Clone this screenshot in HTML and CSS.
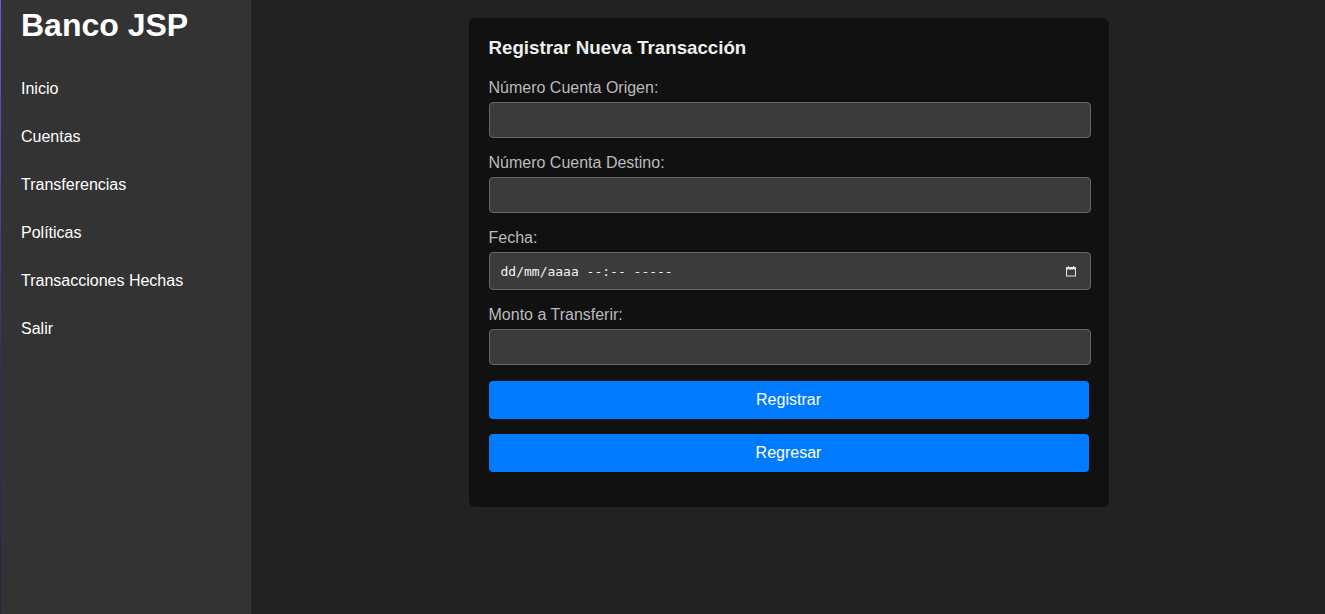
FILE: index.html
```html
<!DOCTYPE html>
<html lang="es">
<head>
<meta charset="utf-8">
<title>Banco JSP</title>
<link rel="stylesheet" href="styles.css">
</head>
<body>
<div class="layout">
  <aside class="sidebar">
    <h1 class="brand">Banco JSP</h1>
    <nav class="nav">
      <a href="#">Inicio</a>
      <a href="#">Cuentas</a>
      <a href="#">Transferencias</a>
      <a href="#">Políticas</a>
      <a href="#">Transacciones Hechas</a>
      <a href="#">Salir</a>
    </nav>
  </aside>
  <main class="main">
    <form class="card">
      <h2 class="card-title">Registrar Nueva Transacción</h2>
      <div class="field">
        <label>Número Cuenta Origen:</label>
        <input class="input" type="text">
      </div>
      <div class="field">
        <label>Número Cuenta Destino:</label>
        <input class="input" type="text">
      </div>
      <div class="field">
        <label>Fecha:</label>
        <div class="input date-input">
          <span class="date-text">dd/mm/aaaa --:-- -----</span>
          <svg class="cal" width="12" height="12" viewBox="0 0 12 12" aria-hidden="true">
            <rect x="1.5" y="2.5" width="9" height="8.5" fill="none" stroke="#e6e6e6" stroke-width="1"/>
            <rect x="1.5" y="2.5" width="9" height="2" fill="#e6e6e6"/>
            <rect x="3" y="1" width="1" height="2" fill="#e6e6e6"/>
            <rect x="8" y="1" width="1" height="2" fill="#e6e6e6"/>
          </svg>
        </div>
      </div>
      <div class="field">
        <label>Monto a Transferir:</label>
        <input class="input" type="text">
      </div>
      <button type="button" class="btn">Registrar</button>
      <button type="button" class="btn">Regresar</button>
    </form>
  </main>
</div>
</body>
</html>
```
FILE: styles.css
```css
html, body {
  margin: 0;
  padding: 0;
  height: 100%;
}
body {
  font-family: "Liberation Sans", Arial, sans-serif;
  background: #222222;
  color: #ffffff;
}
.layout {
  display: flex;
  min-height: 100vh;
}
.sidebar {
  flex: 0 0 251px;
  width: 251px;
  background: #333333;
  border-left: 1px solid #6f4bd0;
  border-image: linear-gradient(to bottom, #7a52e0, #3b2a6a 60%, #2a2340) 1;
  padding: 0 0 0 20px;
  box-sizing: border-box;
}
.brand {
  margin: 7px 0 0;
  font-size: 32px;
  font-weight: bold;
  line-height: 37px;
}
.nav {
  display: flex;
  flex-direction: column;
  margin-top: 36px;
  gap: 30px;
}
.nav a {
  color: #ffffff;
  text-decoration: none;
  font-size: 16px;
  line-height: 18px;
}
.main {
  flex: 1;
  display: flex;
  justify-content: center;
  align-items: flex-start;
  padding: 18px 0 0 1px;
}
.card {
  width: 640px;
  box-sizing: border-box;
  background: #111111;
  border-radius: 6px;
  padding: 20px 20px 35px;
  display: flex;
  flex-direction: column;
}
.card-title {
  margin: 0 0 21px;
  font-size: 18.72px;
  line-height: 20px;
  color: #eeeeee;
  font-weight: bold;
}
.field {
  display: flex;
  flex-direction: column;
  margin-bottom: 16px;
}
.field label {
  font-size: 16px;
  line-height: 18px;
  color: #bbbbbb;
  margin-bottom: 5px;
}
.input {
  width: 602px;
  height: 36px;
  box-sizing: border-box;
  background: #3b3b3b;
  border: 1px solid #666666;
  border-radius: 4px;
  color: #ffffff;
  padding: 0 10px;
  font-size: 16px;
  outline: none;
}
.date-input {
  height: 38px;
  display: flex;
  align-items: center;
  justify-content: space-between;
  padding: 0 13px 0 11px;
}
.date-text {
  font-family: "DejaVu Sans Mono", "Liberation Mono", monospace;
  font-size: 13px;
  color: #f2f2f2;
}
.cal {
  display: block;
}
.btn {
  width: 600px;
  height: 38px;
  background: #007bff;
  color: #ffffff;
  border: none;
  border-radius: 4px;
  font-family: "Liberation Sans", Arial, sans-serif;
  font-size: 16px;
  margin-bottom: 15px;
  padding: 0;
  cursor: pointer;
}
.btn:last-child {
  margin-bottom: 0;
}
```
